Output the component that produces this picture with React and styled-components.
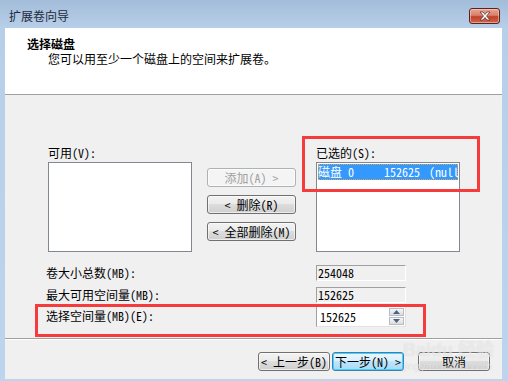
import React from 'react';
import styled, { createGlobalStyle } from 'styled-components';

const GlobalStyle = createGlobalStyle`
  html, body {
    margin: 0;
    padding: 0;
    overflow: hidden;
  }
  body {
    font-family: "Noto Sans Mono CJK SC", "Noto Sans CJK SC", sans-serif;
    font-size: 12px;
    color: #000;
  }
`;

const Window = styled.div`
  position: relative;
  width: 508px;
  height: 381px;
  overflow: hidden;
  display: flex;
  flex-direction: column;
  background: linear-gradient(to bottom, #a3bcd9 0px, #b7cfe9 28px, #bcd4ee 100%);
`;

const TitleBar = styled.div`
  height: 28px;
  flex: none;
  display: flex;
  align-items: center;
  justify-content: space-between;
  padding: 3px 8px 0 9px;
  box-sizing: border-box;
  font-family: "Noto Sans CJK SC", sans-serif;
  font-size: 12px;
  color: #1e2a3a;
`;

const CloseButton = styled.div`
  width: 31px;
  height: 16px;
  border: 1px solid #5a2323;
  border-radius: 3px;
  box-sizing: border-box;
  background: linear-gradient(to bottom, #e9a694 0%, #d8806b 45%, #c0402a 55%, #d0674c 100%);
  display: flex;
  align-items: center;
  justify-content: center;
  box-shadow: inset 0 0 0 1px rgba(255, 220, 210, 0.5);
`;

const Frame = styled.div`
  flex: 1;
  min-height: 0;
  margin: 0 6px 2px 5px;
  display: flex;
  flex-direction: column;
  background: #f0f0f0;
`;

const Header = styled.div`
  height: 58px;
  flex: none;
  background: #fff;
  border-bottom: 1px solid #a0a0a0;
  padding: 8px 0 0 22px;
  box-sizing: content-box;
`;

const HeaderTitle = styled.div`
  font-weight: bold;
  line-height: 15px;
`;

const HeaderText = styled.div`
  margin-left: 21px;
  line-height: 15px;
`;

const Body = styled.div`
  position: relative;
  flex: 1;
  padding-top: 50px;
`;

const ListsRow = styled.div`
  display: flex;
  align-items: flex-start;
  padding-left: 43px;
`;

const ListColumn = styled.div`
  display: flex;
  flex-direction: column;
  margin-left: ${p => p.$offset || 0}px;
`;

const Label = styled.div`
  line-height: 15px;
  height: 17px;
  white-space: pre;
`;

const ListBox = styled.div`
  width: 144px;
  height: 90px;
  box-sizing: border-box;
  border: 1px solid #828790;
  background: #fff;
  padding: 1px;
  overflow: hidden;
`;

const ListItem = styled.div`
  display: flex;
  height: 16px;
  line-height: 16px;
  background: #3399ff;
  color: #fff;
  white-space: pre;
  overflow: hidden;
  outline: 1px dotted #d9a24f;
  outline-offset: -1px;
`;

const Cell = styled.span`
  flex: none;
  width: ${p => (p.$w ? `${p.$w}px` : 'auto')};
`;

const ButtonColumn = styled.div`
  display: flex;
  flex-direction: column;
  gap: 8px;
  margin-left: 15px;
  padding-top: 23px;
`;

const Button = styled.div`
  width: ${p => p.$w || 89}px;
  height: 19px;
  box-sizing: border-box;
  display: flex;
  align-items: center;
  justify-content: center;
  white-space: pre;
  border-radius: 3px;
  border: 1px solid ${p => (p.$disabled ? '#adb2b5' : p.$default ? '#3c7fb1' : '#707070')};
  color: ${p => (p.$disabled ? '#a0a0a0' : '#000')};
  background: ${p =>
    p.$disabled
      ? '#f4f4f4'
      : p.$default
      ? 'linear-gradient(to bottom, #eaf6fd 0%, #d9f0fc 45%, #bee6fd 50%, #a7d9f5 100%)'
      : 'linear-gradient(to bottom, #f2f2f2 0%, #ebebeb 45%, #dddddd 50%, #cfcfcf 100%)'};
  box-shadow: inset 0 0 0 1px ${p => (p.$default ? '#48cffa' : 'rgba(255,255,255,0.6)')};
`;

const Fields = styled.div`
  margin-top: 13px;
  padding-left: 41px;
`;

const FieldRow = styled.div`
  display: flex;
  align-items: flex-start;
  margin-top: ${p => p.$top || 0}px;
`;

const FieldLabel = styled.div`
  width: 270px;
  line-height: 16px;
  padding-top: ${p => p.$pad || 0}px;
  white-space: pre;
`;

const ReadOnlyBox = styled.div`
  width: 90px;
  height: 16px;
  box-sizing: border-box;
  border: 1px solid;
  border-color: #a0a0a0 #fff #fff #a0a0a0;
  line-height: 14px;
  padding-left: 1px;
  background: #f0f0f0;
`;

const SpinBox = styled.div`
  width: 90px;
  height: 21px;
  box-sizing: border-box;
  border: 1px solid;
  border-color: #a0a0a0 #e3e3e3 #e3e3e3 #a0a0a0;
  background: #fff;
  display: flex;
  align-items: center;
  justify-content: space-between;
  padding: 0 1px 0 3px;
`;

const SpinButtons = styled.div`
  display: flex;
  flex-direction: column;
  gap: 1px;
`;

const SpinButton = styled.div`
  width: 15px;
  height: 8px;
  box-sizing: border-box;
  border: 1px solid #b8bcc4;
  background: linear-gradient(to bottom, #f6f6f6, #dcdcdc);
  display: flex;
  align-items: center;
  justify-content: center;
`;

const Annotation = styled.div`
  position: absolute;
  left: ${p => p.$x}px;
  top: ${p => p.$y}px;
  width: ${p => p.$w}px;
  height: ${p => p.$h}px;
  box-sizing: border-box;
  border: 3px solid #f53b3b;
  pointer-events: none;
`;

const Footer = styled.div`
  position: relative;
  height: 41px;
  flex: none;
  border-top: 1px solid #a0a0a0;
  box-shadow: inset 0 1px 0 #fff;
  display: flex;
  justify-content: flex-end;
  align-items: flex-start;
  padding: 13px 12px 0 0;
  box-sizing: border-box;
  overflow: hidden;
`;

const FooterGroup = styled.div`
  display: flex;
  gap: 2px;
  margin-right: 14px;
`;

const Watermark = styled.div`
  position: absolute;
  left: 398px;
  top: 1px;
  font-family: "Liberation Sans", "Noto Sans CJK SC", sans-serif;
  color: rgba(255, 255, 255, 0.5);
  text-shadow: 0 0 1px rgba(140, 140, 140, 0.3);
  pointer-events: none;
  z-index: 1;
`;

const WatermarkBig = styled.div`
  font-size: 18px;
  font-weight: bold;
  line-height: 20px;
  white-space: nowrap;
`;

const WatermarkSmall = styled.div`
  font-size: 11px;
  line-height: 13px;
  white-space: nowrap;
`;

const CloseIcon = () => (
  <svg width="14" height="10" viewBox="0 0 14 10">
    <path
      d="M2 1 L5 1 L7 3.5 L9 1 L12 1 L8.5 5 L12 9 L9 9 L7 6.5 L5 9 L2 9 L5.5 5 Z"
      fill="#fff"
      stroke="#5a3a3a"
      strokeWidth="0.8"
      strokeLinejoin="round"
    />
  </svg>
);

const Arrow = ({ up }) => (
  <svg width="7" height="4" viewBox="0 0 7 4">
    <path d={up ? 'M0 4 L3.5 0 L7 4 Z' : 'M0 0 L3.5 4 L7 0 Z'} fill="#4d6185" />
  </svg>
);

const App = () => {
  return (
    <>
      <GlobalStyle />
      <Window>
        <TitleBar>
          <span>扩展卷向导</span>
          <CloseButton>
            <CloseIcon />
          </CloseButton>
        </TitleBar>
        <Frame>
          <Header>
            <HeaderTitle>选择磁盘</HeaderTitle>
            <HeaderText>您可以用至少一个磁盘上的空间来扩展卷。</HeaderText>
          </Header>
          <Body>
            <ListsRow>
              <ListColumn>
                <Label>可用(V):</Label>
                <ListBox />
              </ListColumn>
              <ButtonColumn>
                <Button $disabled>添加(A) &gt;</Button>
                <Button>&lt; 删除(R)</Button>
                <Button>&lt; 全部删除(M)</Button>
              </ButtonColumn>
              <ListColumn $offset={20}>
                <Label>已选的(S):</Label>
                <ListBox>
                  <ListItem>
                    <Cell $w={66}>磁盘 0</Cell>
                    <Cell $w={45}>152625</Cell>
                    <Cell>(null</Cell>
                  </ListItem>
                </ListBox>
              </ListColumn>
            </ListsRow>
            <Fields>
              <FieldRow>
                <FieldLabel>卷大小总数(MB):</FieldLabel>
                <ReadOnlyBox>254048</ReadOnlyBox>
              </FieldRow>
              <FieldRow $top={6}>
                <FieldLabel>最大可用空间量(MB):</FieldLabel>
                <ReadOnlyBox>152625</ReadOnlyBox>
              </FieldRow>
              <FieldRow $top={3}>
                <FieldLabel $pad={2}>选择空间量(MB)(E):</FieldLabel>
                <SpinBox>
                  <span>152625</span>
                  <SpinButtons>
                    <SpinButton>
                      <Arrow up />
                    </SpinButton>
                    <SpinButton>
                      <Arrow />
                    </SpinButton>
                  </SpinButtons>
                </SpinBox>
              </FieldRow>
            </Fields>
            <Annotation $x={297} $y={41} $w={178} $h={56} />
            <Annotation $x={30} $y={209} $w={391} $h={33} />
          </Body>
          <Footer>
            <Watermark>
              <WatermarkBig>Baidu 经验</WatermarkBig>
              <WatermarkSmall>jingyan.baidu.com</WatermarkSmall>
            </Watermark>
            <FooterGroup>
              <Button $w={72}>&lt; 上一步(B)</Button>
              <Button $w={72} $default>
                下一步(N) &gt;
              </Button>
            </FooterGroup>
            <Button $w={72}>取消</Button>
          </Footer>
        </Frame>
      </Window>
    </>
  );
};

export default App;
